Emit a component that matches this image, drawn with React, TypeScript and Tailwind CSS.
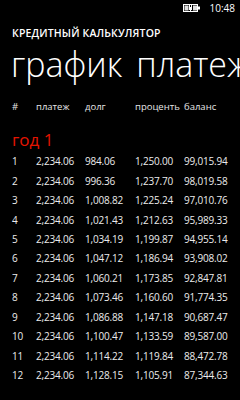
import React from "react";

const rows: string[][] = [
  ["1", "2,234.06", "984.06", "1,250.00", "99,015.94"],
  ["2", "2,234.06", "996.36", "1,237.70", "98,019.58"],
  ["3", "2,234.06", "1,008.82", "1,225.24", "97,010.76"],
  ["4", "2,234.06", "1,021.43", "1,212.63", "95,989.33"],
  ["5", "2,234.06", "1,034.19", "1,199.87", "94,955.14"],
  ["6", "2,234.06", "1,047.12", "1,186.94", "93,908.02"],
  ["7", "2,234.06", "1,060.21", "1,173.85", "92,847.81"],
  ["8", "2,234.06", "1,073.46", "1,160.60", "91,774.35"],
  ["9", "2,234.06", "1,086.88", "1,147.18", "90,687.47"],
  ["10", "2,234.06", "1,100.47", "1,133.59", "89,587.00"],
  ["11", "2,234.06", "1,114.22", "1,119.84", "88,472.78"],
  ["12", "2,234.06", "1,128.15", "1,105.91", "87,344.63"],
];

function Battery() {
  return (
    <svg width="17" height="8" viewBox="0 0 17 8" className="block">
      <rect x="0.5" y="0.5" width="14" height="7" fill="none" stroke="#fff" strokeWidth="1" />
      <rect x="1.5" y="1.5" width="4" height="5" fill="#ddd" />
      <rect x="10" y="1.5" width="4" height="5" fill="#ddd" />
      <rect x="15" y="2.5" width="2" height="3" fill="#fff" />
      <rect x="6" y="3" width="3" height="3" fill="#fff" />
      <rect x="6" y="1" width="1" height="2" fill="#fff" />
      <rect x="8" y="1" width="1" height="2" fill="#fff" />
      <rect x="7" y="5" width="1" height="2" fill="#fff" />
    </svg>
  );
}

export default function App() {
  return (
    <div
      className="w-[240px] h-[400px] bg-black text-white overflow-hidden"
      style={{ fontFamily: '"Open Sans", "Noto Sans", sans-serif' }}
    >
      <div className="h-[16px] flex items-center justify-end pr-[5px] gap-[10px]">
        <Battery />
        <span className="text-[10px] leading-[12px]">10:48</span>
      </div>
      <div className="pl-[12px] mt-[10px] text-[10.5px] leading-[14px] font-semibold tracking-[0.15px]">
        КРЕДИТНЫЙ КАЛЬКУЛЯТОР
      </div>
      <div className="pl-[11px] mt-[3px] text-[34px] leading-[42px] font-light whitespace-nowrap [word-spacing:5px]">
        график платежей
      </div>
      <div className="pl-[12px] mt-[13px]">
        <div className="grid grid-cols-[24px_49px_50px_49px_1fr] h-[19px] items-center text-[9.5px] text-[#e6e6e6]">
          <span>#</span>
          <span>платеж</span>
          <span>долг</span>
          <span>проценть</span>
          <span>баланс</span>
        </div>
        <div className="mt-[12px] text-[17px] leading-[22px] text-[#e51400] font-normal">год 1</div>
        <div className="mt-[1px]">
          {rows.map((r) => (
            <div
              key={r[0]}
              className="grid grid-cols-[24px_49px_50px_49px_1fr] h-[19.45px] items-center text-[10px] text-[#ececec] tracking-[-0.2px]"
            >
              {r.map((c, i) => (
                <span key={i}>{c}</span>
              ))}
            </div>
          ))}
        </div>
        <div className="mt-[10px] text-[17px] leading-[22px] text-[#e51400]">год 2</div>
      </div>
    </div>
  );
}
